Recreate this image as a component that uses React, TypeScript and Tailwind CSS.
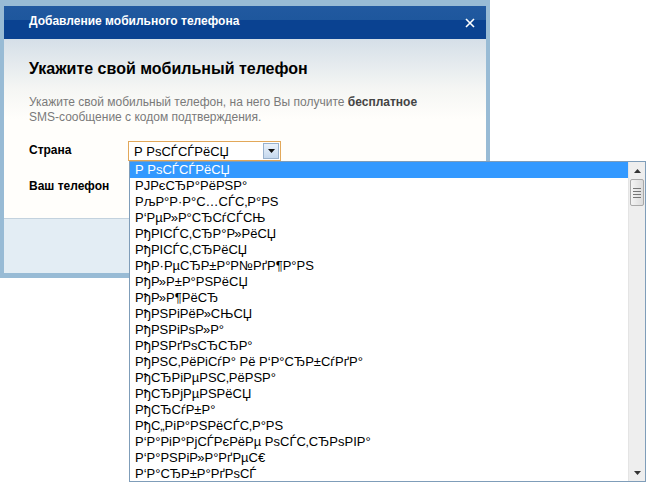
const countries = [
  "Р РѕСЃСЃРёСЏ",
  "РЈРєСЂР°РёРЅР°",
  "РљР°Р·Р°С…СЃС‚Р°РЅ",
  "Р‘РµР»Р°СЂСѓСЃСЊ",
  "РђРІСЃС‚СЂР°Р»РёСЏ",
  "РђРІСЃС‚СЂРёСЏ",
  "РђР·РµСЂР±Р°Р№РґР¶Р°РЅ",
  "РђР»Р±Р°РЅРёСЏ",
  "РђР»Р¶РёСЂ",
  "РђРЅРіРёР»СЊСЏ",
  "РђРЅРіРѕР»Р°",
  "РђРЅРґРѕСЂСЂР°",
  "РђРЅС‚РёРіСѓР° Рё Р‘Р°СЂР±СѓРґР°",
  "РђСЂРіРµРЅС‚РёРЅР°",
  "РђСЂРјРµРЅРёСЏ",
  "РђСЂСѓР±Р°",
  "РђС„РіР°РЅРёСЃС‚Р°РЅ",
  "Р‘Р°РіР°РјСЃРєРёРµ РѕСЃС‚СЂРѕРІР°",
  "Р‘Р°РЅРіР»Р°РґРµС€",
  "Р‘Р°СЂР±Р°РґРѕСЃ",
];

function Scrollbar() {
  return (
    <div className="w-[17px] h-full bg-[#eeeeee] border-l border-[#e4e4e4] flex flex-col">
      <div className="h-[17px] flex items-center justify-center">
        <svg width="7" height="4" viewBox="0 0 7 4">
          <path d="M0 4 L3.5 0 L7 4 Z" fill="#333" />
        </svg>
      </div>
      {/* thumb */}
      <div className="mx-[1px] h-[27px] rounded-[2px] border border-[#a9a9a9] bg-[linear-gradient(to_right,#f4f4f4,#dcdcdc)] flex flex-col items-center justify-center gap-[2px]">
        <div className="w-[8px] h-[1px] bg-[#777]" />
        <div className="w-[8px] h-[1px] bg-[#777]" />
        <div className="w-[8px] h-[1px] bg-[#777]" />
        <div className="w-[8px] h-[1px] bg-[#777]" />
      </div>
      <div className="flex-1" />
      <div className="h-[17px] flex items-center justify-center">
        <svg width="7" height="4" viewBox="0 0 7 4">
          <path d="M0 0 L7 0 L3.5 4 Z" fill="#333" />
        </svg>
      </div>
    </div>
  );
}

export default function App() {
  return (
    <div className="relative w-[646px] h-[483px] bg-white font-['Liberation_Sans',Arial,sans-serif] overflow-hidden">
      {/* dialog frame */}
      <div className="w-[490px] bg-[#98bbd5] pt-[6px] px-[4px] pb-[5px]">
        {/* title bar */}
        <div className="h-[33px] bg-[linear-gradient(to_bottom,#2159a0_0,#1e579d_14px,#0a4291_14px,#0a4291_100%)] flex items-center justify-between pl-[25px] pr-[11px]">
          <span className="text-white font-bold text-[12px] pb-[3px]">
            Добавление мобильного телефона
          </span>
          <svg width="10" height="10" viewBox="0 0 10 10" className="mt-[1px]">
            <path d="M1 1 L9 9 M9 1 L1 9" stroke="#fff" strokeWidth="1.6" />
          </svg>
        </div>

        {/* body */}
        <div className="bg-[linear-gradient(to_bottom,#d5dfe8_0,#f5f6f4_50px,#fffefb_80px,#fffefb_100%)] pt-[19px] px-[25px] pb-[20px] h-[179px]">
          <h1 className="text-[16px] font-bold text-black leading-[22px]">
            Укажите свой мобильный телефон
          </h1>
          <p className="mt-[15px] text-[12px] leading-[15px] text-[#7a7a7a]">
            Укажите свой мобильный телефон, на него Вы получите{" "}
            <b className="text-[#444]">бесплатное</b>
            <br />
            SMS-сообщение с кодом подтверждения.
          </p>

          <div className="mt-[16px] flex items-start">
            <span className="w-[99px] text-[12px] font-bold text-black">
              Страна
            </span>
            <div className="w-[153px] h-[20px] border border-[#e2a85a] bg-white flex items-center pl-[5px] pr-[1px]">
              <span className="flex-1 text-[13px] text-black leading-none">
                Р РѕСЃСЃРёСЏ
              </span>
              <div className="w-[16px] h-[16px] border border-[#98b1cd] bg-[linear-gradient(to_bottom,#eaf2fb,#c5d8ee)] flex items-center justify-center">
                <svg width="7" height="4" viewBox="0 0 7 4">
                  <path d="M0 0 L7 0 L3.5 4 Z" fill="#111" />
                </svg>
              </div>
            </div>
          </div>

          <div className="mt-[12px]">
            <span className="text-[12px] font-bold text-black">Ваш телефон</span>
          </div>
        </div>

        {/* footer */}
        <div className="h-[55px] bg-[#e3edf4] border-t border-[#c3d2de]" />
      </div>

      {/* open select list */}
      <div className="absolute left-[129px] top-[161px] w-[517px] h-[321px] bg-white border border-[#7f9db9] flex">
        <ul className="flex-1 text-[13px] text-black leading-[16px]">
          {countries.map((c, i) => (
            <li
              key={i}
              className={
                i === 0
                  ? "h-[16px] pl-[5px] bg-[#3399ff] text-white whitespace-pre"
                  : "h-[16px] pl-[5px] whitespace-pre"
              }
            >
              {c}
            </li>
          ))}
        </ul>
        <Scrollbar />
      </div>
    </div>
  );
}
